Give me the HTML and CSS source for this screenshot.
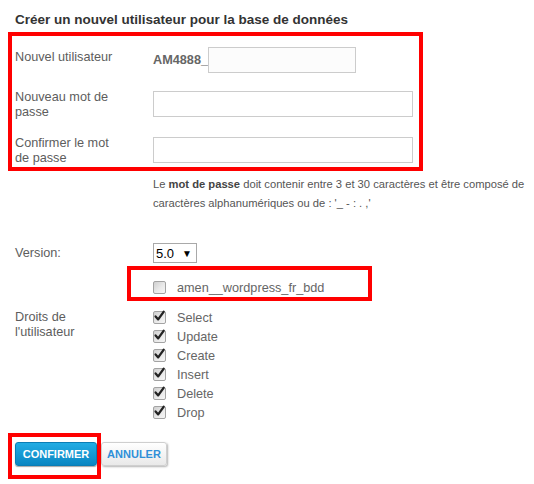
FILE: index.html
```html
<!DOCTYPE html>
<html lang="fr">
<head>
<meta charset="utf-8">
<title>Créer un nouvel utilisateur</title>
<link rel="stylesheet" href="styles.css">
</head>
<body>
<div class="page">
  <h1 class="title">Créer un nouvel utilisateur pour la base de données</h1>

  <div class="mark mark-main">
    <div class="row row-1">
      <div class="lbl">Nouvel utilisateur</div>
      <div class="field user"><span class="prefix">AM4888_</span><span class="inp inp-s"></span></div>
    </div>
    <div class="row row-2">
      <div class="lbl">Nouveau mot de<br>passe</div>
      <div class="field"><span class="inp inp-l"></span></div>
    </div>
    <div class="row row-3">
      <div class="lbl">Confirmer le mot<br>de passe</div>
      <div class="field"><span class="inp inp-l"></span></div>
    </div>
  </div>

  <p class="help">Le <b>mot de passe</b> doit contenir entre 3 et 30 caractères et être composé de<br>caractères alphanumériques ou de : '_ - : . ,'</p>

  <div class="vrow">
    <div class="lbl-v">Version:</div>
    <div class="select"><span class="sel-val">5.0</span><span class="sel-arrow">▼</span></div>
  </div>

  <div class="mark mark-db">
    <div class="check"><span class="cb"></span><span class="ctext">amen__wordpress_fr_bdd</span></div>
  </div>

  <div class="rights">
    <div class="lbl-r">Droits de<br>l'utilisateur</div>
    <div class="checks">
      <div class="check"><span class="cb on"><svg viewBox="0 0 13 13"><path d="M2.6 6.4 L5.2 9.4 L10.6 1.8"/></svg></span><span class="ctext">Select</span></div>
      <div class="check"><span class="cb on"><svg viewBox="0 0 13 13"><path d="M2.6 6.4 L5.2 9.4 L10.6 1.8"/></svg></span><span class="ctext">Update</span></div>
      <div class="check"><span class="cb on"><svg viewBox="0 0 13 13"><path d="M2.6 6.4 L5.2 9.4 L10.6 1.8"/></svg></span><span class="ctext">Create</span></div>
      <div class="check"><span class="cb on"><svg viewBox="0 0 13 13"><path d="M2.6 6.4 L5.2 9.4 L10.6 1.8"/></svg></span><span class="ctext">Insert</span></div>
      <div class="check"><span class="cb on"><svg viewBox="0 0 13 13"><path d="M2.6 6.4 L5.2 9.4 L10.6 1.8"/></svg></span><span class="ctext">Delete</span></div>
      <div class="check"><span class="cb on"><svg viewBox="0 0 13 13"><path d="M2.6 6.4 L5.2 9.4 L10.6 1.8"/></svg></span><span class="ctext">Drop</span></div>
    </div>
  </div>

  <div class="actions">
    <div class="mark mark-btn"><span class="btn btn-primary">CONFIRMER</span></div>
    <span class="btn btn-secondary">ANNULER</span>
  </div>
</div>
</body>
</html>
```

FILE: styles.css
```css
* { box-sizing: border-box; }
html, body { margin: 0; padding: 0; background: #fff; }
body {
  font-family: "Liberation Sans", Arial, sans-serif;
  font-size: 12.7px;
  color: #5d5d5d;
}
.page {
  padding: 11px 0 0 8px;
  width: 534px;
}
.title {
  margin: 0 0 4px 7px;
  font-size: 13.5px;
  line-height: 17px;
  font-weight: bold;
  color: #333;
}
.mark { border: 4px solid #ff0000; }
.mark-main {
  width: 415px;
  padding: 11px 0 1px 3px;
}
.row {
  display: grid;
  grid-template-columns: 138px 1fr;
  margin-bottom: 15px;
}
.row-2 { margin-bottom: 14px; }
.row-3 { margin-bottom: 0; }
.lbl {
  padding-top: 2px;
  line-height: 15px;
}
.row-1 .lbl { padding-top: 3px; }
.field { display: flex; align-items: center; }
.prefix {
  font-weight: bold;
  color: #666;
}
.inp {
  display: block;
  height: 26px;
  border: 1px solid #cccccc;
  background: #fff;
}
.inp-s { width: 148px; background: #fcfcfc; }
.inp-l { width: 260px; }

.help {
  margin: 4px 0 0 145px;
  font-size: 11.2px;
  line-height: 19px;
  color: #555;
}
.help b { color: #444; }

.vrow {
  display: grid;
  grid-template-columns: 138px 1fr;
  align-items: center;
  margin-top: 30px;
  padding-left: 7px;
}
.lbl-v { line-height: 20px; }
.select {
  display: flex;
  align-items: center;
  width: 44px;
  height: 20px;
  border: 1px solid #a9a9a9;
  background: #fff;
  padding-left: 2px;
}
.sel-val { color: #000; font-size: 13px; }
.sel-arrow { font-size: 10px; color: #000; margin-left: 8px; }

.mark-db {
  width: 245px;
  height: 35px;
  margin: 3px 0 0 119px;
  padding: 8px 0 0 22px;
}
.check {
  display: flex;
  align-items: center;
  height: 19px;
}
.cb {
  position: relative;
  display: inline-block;
  width: 13px;
  height: 13px;
  border: 1px solid #a3a3a3;
  border-radius: 2px;
  background: linear-gradient(135deg, #cfcfcf 0%, #e9e9e9 55%, #f6f6f6 100%);
  flex: none;
}
.cb svg {
  position: absolute;
  left: -1px;
  top: -2px;
  width: 13px;
  height: 13px;
  overflow: visible;
}
.cb svg path {
  fill: none;
  stroke: #222;
  stroke-width: 2.3;
  stroke-linecap: round;
  stroke-linejoin: round;
}
.ctext {
  margin-left: 11px;
  color: #666;
}

.rights {
  display: grid;
  grid-template-columns: 138px 1fr;
  margin-top: 7px;
  padding-left: 7px;
}
.lbl-r { line-height: 15px; padding-top: 2px; }

.actions {
  display: flex;
  align-items: flex-start;
  margin-top: 11px;
}
.mark-btn {
  width: 93px;
  height: 46px;
  padding: 5px 0 0 3px;
}
.btn {
  display: flex;
  align-items: center;
  justify-content: center;
  height: 24px;
  border-radius: 3px;
  font-size: 11px;
  font-weight: bold;
}
.btn-primary {
  width: 82px;
  color: #fff;
  background: linear-gradient(#22ace4, #0a86c2);
  border: 1px solid #0b7db5;
  box-shadow: 0 1px 1px rgba(0,0,0,0.35);
}
.btn-secondary {
  width: 66px;
  margin-top: 9px;
  color: #2f8fd8;
  background: linear-gradient(#ffffff, #e9e9e9);
  border: 1px solid #cfcfcf;
  box-shadow: 1px 1px 2px rgba(0,0,0,0.3);
}
```
